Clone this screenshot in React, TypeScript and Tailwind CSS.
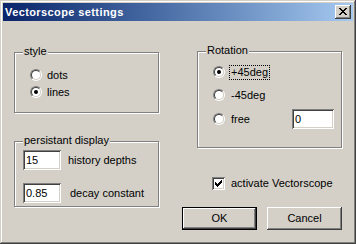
import type { ReactNode } from 'react'

const raised =
  'shadow-[inset_-1px_-1px_#404040,inset_1px_1px_#ffffff,inset_-2px_-2px_#808080,inset_2px_2px_#d4d0c8]'
const sunken =
  'shadow-[inset_1px_1px_#808080,inset_-1px_-1px_#ffffff,inset_2px_2px_#404040,inset_-2px_-2px_#d4d0c8]'

function CloseGlyph() {
  const rows = ['XX....XX', '.XX..XX.', '..XXXX..', '...XX...', '..XXXX..', '.XX..XX.', 'XX....XX']
  return (
    <svg width="8" height="7" viewBox="0 0 8 7" shapeRendering="crispEdges">
      {rows.flatMap((r, y) =>
        r.split('').map((c, x) => (c === 'X' ? <rect key={`${x}-${y}`} x={x} y={y} width="1" height="1" fill="#000" /> : null)),
      )}
    </svg>
  )
}

function CheckGlyph() {
  const rows = ['......X', '.....XX', 'X...XXX', 'XX.XXX.', 'XXXXX..', '.XXX...', '..X....']
  return (
    <svg width="7" height="7" viewBox="0 0 7 7" shapeRendering="crispEdges">
      {rows.flatMap((r, y) =>
        r.split('').map((c, x) => (c === 'X' ? <rect key={`${x}-${y}`} x={x} y={y} width="1" height="1" fill="#000" /> : null)),
      )}
    </svg>
  )
}

function Radio({ checked }: { checked?: boolean }) {
  return (
    <div className="flex h-[12px] w-[12px] shrink-0 rounded-full border border-t-[#808080] border-l-[#808080] border-b-white border-r-white">
      <div className="flex h-[10px] w-[10px] items-center justify-center rounded-full border border-t-[#404040] border-l-[#404040] border-b-[#d4d0c8] border-r-[#d4d0c8] bg-white">
        {checked ? <div className="h-[4px] w-[4px] rounded-full bg-black" /> : null}
      </div>
    </div>
  )
}

function Group({ label, className, children }: { label: string; className: string; children: ReactNode }) {
  return (
    <div className={`relative w-[145px] border border-[#808080] shadow-[inset_1px_1px_#ffffff,1px_1px_#ffffff] ${className}`}>
      <span className="absolute left-[8px] top-[-8px] bg-[#d4d0c8] px-[1px] leading-[13px]">{label}</span>
      {children}
    </div>
  )
}

function Edit({ value, className }: { value: string; className: string }) {
  return <div className={`flex items-center bg-white pl-[3px] leading-[13px] ${sunken} ${className}`}>{value}</div>
}

export default function App() {
  return (
    <div
      className="h-[244px] w-[356px] bg-[#d4d0c8] p-[3px] text-[11px] text-black shadow-[inset_-1px_-1px_#404040,inset_1px_1px_#d4d0c8,inset_-2px_-2px_#808080,inset_2px_2px_#ffffff]"
      style={{ fontFamily: '"Liberation Sans", Arial, sans-serif' }}
    >
      <div className="flex h-[18px] items-center justify-between bg-gradient-to-r from-[#0a246a] to-[#a6caf0] pl-[2px] pr-[2px]">
        <span className="text-[11px] font-bold tracking-[0.4px] text-white">Vectorscope settings</span>
        <div className={`flex h-[14px] w-[16px] items-start bg-[#d4d0c8] pl-[4px] pt-[3px] ${raised}`}>
          <CloseGlyph />
        </div>
      </div>

      <div className="flex">
        <div className="ml-[11px] flex w-[145px] flex-col">
          <Group label="style" className="mt-[31px] h-[61px]">
            <div className="flex flex-col gap-[5px] pl-[15px] pt-[16px]">
              <div className="flex h-[12px] items-center gap-[5px]">
                <Radio />
                <span className="leading-[13px]">dots</span>
              </div>
              <div className="flex h-[12px] items-center gap-[5px]">
                <Radio checked />
                <span className="leading-[13px]">lines</span>
              </div>
            </div>
          </Group>

          <Group label="persistant display" className="mt-[28px] h-[66px]">
            <div className="flex flex-col pl-[8px] pt-[8px]">
              <div className="flex items-center">
                <Edit value="15" className="h-[20px] w-[38px]" />
                <span className="ml-[7px]">history depths</span>
              </div>
              <div className="mt-[13px] flex items-center">
                <Edit value="0.85" className="h-[20px] w-[38px]" />
                <span className="ml-[9px]">decay constant</span>
              </div>
            </div>
          </Group>
        </div>

        <div className="ml-[23px] flex w-[160px] flex-col">
          <div className="pl-[15px]">
            <Group label="Rotation" className="mt-[30px] h-[97px]">
              <div className="flex flex-col pl-[15px] pt-[14px]">
                <div className="flex h-[12px] items-center">
                  <Radio checked />
                  <span className="ml-[4px] border border-dotted border-black px-[1px] leading-[13px]">+45deg</span>
                </div>
                <div className="mt-[11px] flex h-[12px] items-center">
                  <Radio />
                  <span className="ml-[4px] border border-transparent px-[1px] leading-[13px]">-45deg</span>
                </div>
                <div className="mt-[12px] flex h-[12px] items-center">
                  <Radio />
                  <span className="ml-[4px] border border-transparent px-[1px] leading-[13px]">free</span>
                  <Edit value="0" className="ml-auto mr-[7px] h-[20px] w-[42px]" />
                </div>
              </div>
            </Group>
          </div>

          <div className="ml-[30px] mt-[29px] flex items-center">
            <div className={`flex h-[13px] w-[13px] items-start bg-white pl-[3px] pt-[3px] ${sunken}`}>
              <CheckGlyph />
            </div>
            <span className="ml-[6px] leading-[13px]">activate Vectorscope</span>
          </div>

          <div className="mt-[17px] flex gap-[10px]">
            <div className="h-[23px] w-[75px] border border-black">
              <div className={`flex h-full items-center justify-center pb-[1px] ${raised}`}>OK</div>
            </div>
            <div className={`flex h-[23px] w-[75px] items-center justify-center pb-[1px] ${raised}`}>Cancel</div>
          </div>
        </div>
      </div>
    </div>
  )
}
